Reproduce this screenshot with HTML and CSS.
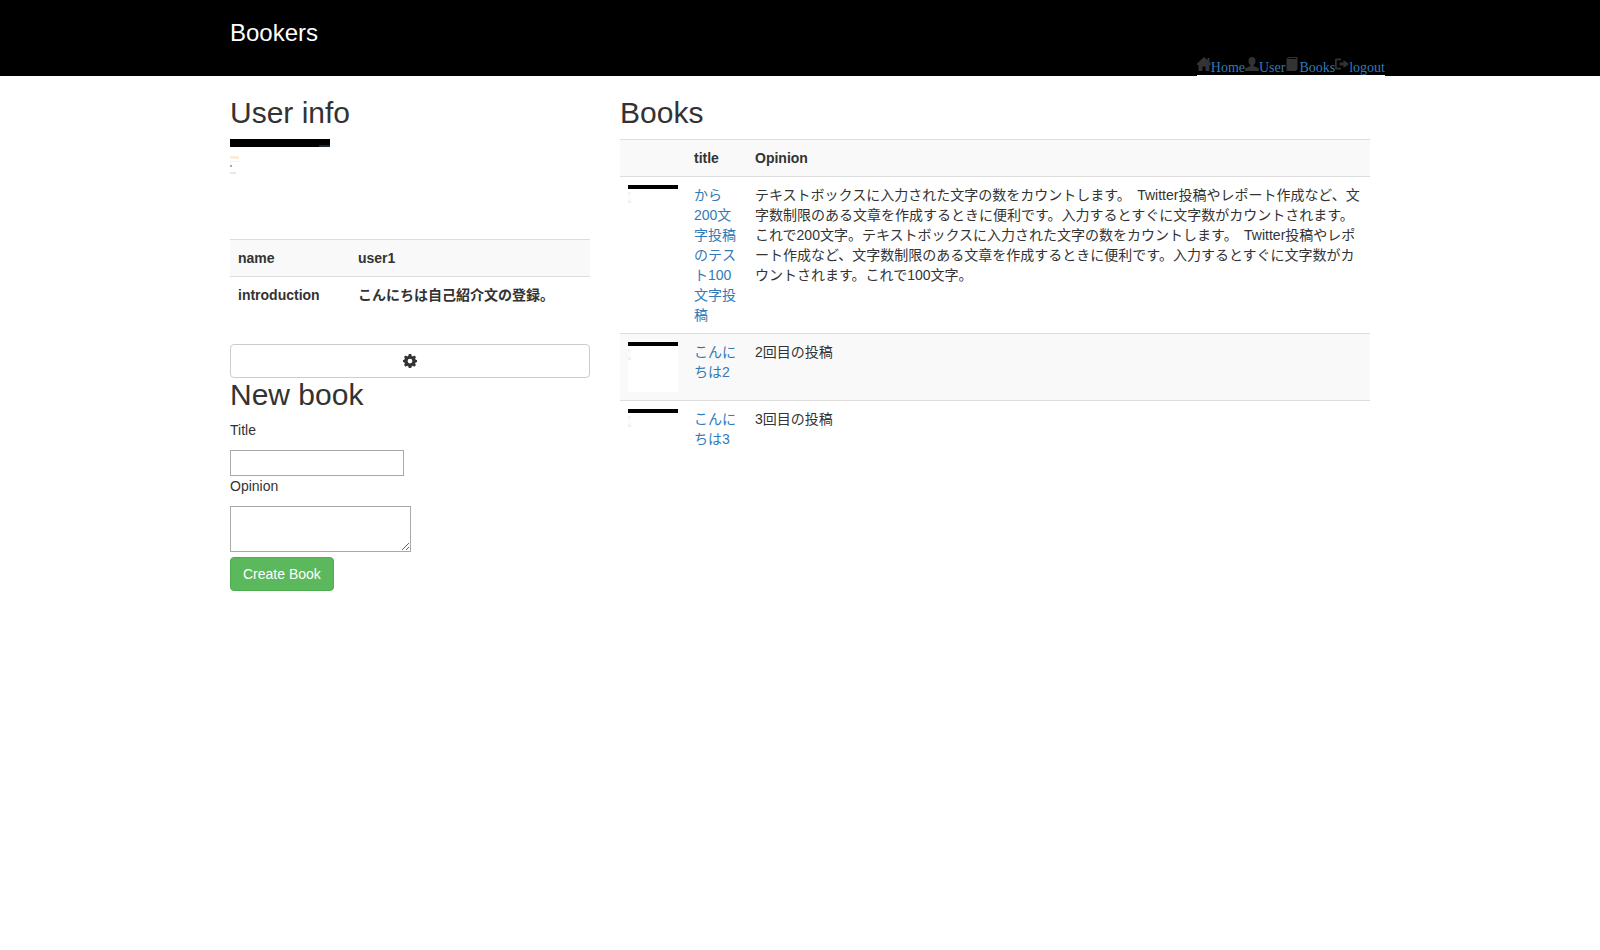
FILE: index.html
```html
<!DOCTYPE html>
<html lang="en">
<head>
  <meta charset="UTF-8" />
  <meta name="viewport" content="width=device-width, initial-scale=1.0"/>
  <title>Bookers</title>
  <link rel="stylesheet" href="styles.css">
</head>
<body>
  <header class="site-header">
    <div class="container header-inner">
      <a class="brand" href="#">Bookers</a>
      <ul class="site-nav">
        <li>
          <svg class="nav-icon" viewBox="0 0 14 14"><path d="M7 0 L10.5 3.2 V1 H12.5 V5 L14 6.4 V8 H12.5 V14 H8.5 V9.5 H5.5 V14 H1.5 V8 H0 V6.4 Z"/></svg><a href="#">Home</a>
        </li>
        <li>
          <svg class="nav-icon" viewBox="0 0 14 14"><path d="M7 0 C9.2 0 10.5 1.6 10.5 4 C10.5 6 9.6 7.4 8.6 8 V9 L13 11 C13.8 11.4 14 12 14 14 H0 C0 12 0.2 11.4 1 11 L5.4 9 V8 C4.4 7.4 3.5 6 3.5 4 C3.5 1.6 4.8 0 7 0 Z"/></svg><a href="#">User</a>
        </li>
        <li>
          <svg class="nav-icon" viewBox="0 0 14 14"><path d="M1.5 2 L3.5 0 H12.5 V12 L11 14 H1.5 Z M3 2 H11 L11.6 1 H4 Z"/></svg><a href="#">Books</a>
        </li>
        <li>
          <svg class="nav-icon" viewBox="0 0 14 14"><path d="M0 3 C0 2 0.8 1.5 1.6 1.5 H6 V3.2 H1.8 V10.8 H6 V12.5 H1.6 C0.8 12.5 0 12 0 11 Z M4.5 5.5 H8.5 V3 L14 7 L8.5 11 V8.5 H4.5 Z"/></svg><a href="#">logout</a>
        </li>
      </ul>
    </div>
  </header>

  <main class="container layout">
    <section class="col-side">
      <h2>User info</h2>
      <div class="profile-image">
        <div class="broken-bar"></div>
        <div class="broken-noise"></div>
      </div>
      <table class="table">
        <tbody>
          <tr class="shaded"><th class="user-label">name</th><th>user1</th></tr>
          <tr><th class="user-label">introduction</th><th>こんにちは自己紹介文の登録。</th></tr>
        </tbody>
      </table>
      <a class="settings-btn" href="#">
        <svg class="gear" viewBox="0 0 14 14"><path fill-rule="evenodd" d="M5.8 0 H8.2 L8.6 1.8 L9.9 2.4 L11.4 1.4 L13 3.1 L12.1 4.5 L12.7 5.8 L14 6.1 V8.1 L12.6 8.5 L12.1 9.7 L13 11.1 L11.3 12.7 L9.9 11.8 L8.6 12.4 L8.2 14 H5.8 L5.4 12.4 L4.1 11.8 L2.7 12.7 L1 11.1 L1.9 9.7 L1.4 8.5 L0 8.1 V6.1 L1.3 5.8 L1.9 4.5 L1 3.1 L2.6 1.4 L4.1 2.4 L5.4 1.8 Z M7 4.7 A2.4 2.4 0 1 0 7 9.5 A2.4 2.4 0 1 0 7 4.7 Z"/></svg>
      </a>
      <h2 class="new-book">New book</h2>
      <form class="book-form">
        <label for="title">Title</label>
        <input id="title" type="text">
        <label for="opinion">Opinion</label>
        <textarea id="opinion"></textarea>
        <button class="btn-create" type="button">Create Book</button>
      </form>
    </section>

    <section class="col-main">
      <h2>Books</h2>
      <table class="table books">
        <thead>
          <tr class="shaded"><th class="thumb-col"></th><th class="title-col">title</th><th>Opinion</th></tr>
        </thead>
        <tbody>
          <tr>
            <td><div class="thumb"><div class="thumb-bar"></div><div class="thumb-noise"></div></div></td>
            <td><a href="#">から200文字投稿のテスト100文字投稿</a></td>
            <td class="opinion">テキストボックスに入力された文字の数をカウントします。 Twitter投稿やレポート作成など、文字数制限のある文章を作成するときに便利です。入力するとすぐに文字数がカウントされます。これで200文字。テキストボックスに入力された文字の数をカウントします。 Twitter投稿やレポート作成など、文字数制限のある文章を作成するときに便利です。入力するとすぐに文字数がカウントされます。これで100文字。</td>
          </tr>
          <tr class="shaded">
            <td><div class="thumb thumb-white"><div class="thumb-bar"></div><div class="thumb-noise"></div></div></td>
            <td><a href="#">こんにちは2</a></td>
            <td>2回目の投稿</td>
          </tr>
          <tr>
            <td><div class="thumb"><div class="thumb-bar"></div><div class="thumb-noise"></div></div></td>
            <td><a href="#">こんにちは3</a></td>
            <td>3回目の投稿</td>
          </tr>
        </tbody>
      </table>
    </section>
  </main>
</body>
</html>
```

FILE: styles.css
```css
/* General */
* {
  box-sizing: border-box;
}

body {
  margin: 0;
  background-color: #fff;
  color: #333;
  font-family: "Liberation Sans", "Noto Sans CJK SC", sans-serif;
  font-size: 14px;
  line-height: 20px;
}

a {
  color: #337ab7;
  text-decoration: none;
}

.container {
  width: 1170px;
  margin: 0 auto;
  padding: 0 15px;
}

/* Header */
.site-header {
  background-color: #000;
  height: 76px;
}

.header-inner {
  position: relative;
  height: 76px;
}

.brand {
  display: block;
  padding-top: 18px;
  color: #fff;
  font-size: 24px;
  line-height: 30px;
}

.site-nav {
  position: absolute;
  right: 0;
  top: 56px;
  display: flex;
  margin: 0;
  padding: 0;
  list-style: none;
  height: 20px;
  border-bottom: 1px solid #fff;
  font-family: "Liberation Serif", serif;
  font-size: 14px;
}

.site-nav li {
  display: flex;
  align-items: flex-start;
}

.site-nav a {
  margin-top: 3px;
  line-height: 18px;
}

.nav-icon {
  width: 14px;
  height: 14px;
  margin-top: 1px;
  fill: #333;
}

/* Columns */
.layout {
  display: grid;
  grid-template-columns: 360px 750px;
  column-gap: 30px;
}

h2 {
  margin: 20px 0 10px;
  font-size: 30px;
  font-weight: 500;
  line-height: 33px;
}

/* Profile */
.profile-image {
  height: 100px;
  width: 100px;
}

.broken-bar {
  position: relative;
  height: 8px;
  background-color: #000;
}

.broken-bar::after {
  content: "";
  position: absolute;
  right: 0;
  bottom: 0;
  width: 11px;
  height: 2px;
  background-color: #1c2836;
}

.broken-noise {
  width: 9px;
  height: 20px;
  margin-top: 9px;
  background:
    linear-gradient(#aaa, #aaa) 0 9px / 2px 2px no-repeat,
    linear-gradient(#dfe8f3, #dfe8f3) 0 16px / 6px 2px no-repeat,
    linear-gradient(#fbeed8, #fbeed8) 0 0 / 9px 3px no-repeat,
    linear-gradient(#f1f1f1, #f1f1f1) 0 5px / 9px 1px no-repeat;
}

/* Tables */
.table {
  width: 100%;
  border-collapse: collapse;
  margin-bottom: 20px;
}

.table th,
.table td {
  padding: 8px;
  border-top: 1px solid #ddd;
  text-align: left;
  vertical-align: top;
}

.shaded {
  background-color: #f9f9f9;
}

.user-label {
  width: 120px;
}

.thumb-col {
  width: 66px;
}

.title-col {
  width: 61px;
}

.opinion {
  word-spacing: 2.5px;
}

.thumb {
  width: 50px;
  height: 50px;
}

.thumb-white {
  background-color: #fff;
}

.thumb-bar {
  height: 4px;
  background-color: #000;
}

.thumb-noise {
  width: 3px;
  height: 11px;
  margin-top: 3px;
  background: linear-gradient(#f4f1ea, #fff 50%, #e8edf5);
}

/* Settings button */
.settings-btn {
  display: flex;
  justify-content: center;
  align-items: center;
  height: 34px;
  margin-top: 31px;
  border: 1px solid #ccc;
  border-radius: 4px;
}

.gear {
  width: 14px;
  height: 14px;
  fill: #333;
}

.new-book {
  margin-top: 0;
  margin-bottom: 9px;
}

/* Form */
.book-form label {
  display: block;
  margin-bottom: 5px;
}

.book-form input,
.book-form textarea {
  display: block;
  border: 1px solid #a9a9a9;
  border-radius: 0;
  padding: 1px 2px;
  margin: 0;
}

.book-form input {
  width: 174px;
  height: 26px;
  margin-top: 10px;
}

.book-form label[for="opinion"] {
  margin-bottom: 10px;
}

.book-form textarea {
  width: 181px;
  height: 46px;
  margin-bottom: 5px;
}

.btn-create {
  display: block;
  height: 34px;
  padding: 6px 12px;
  border: 1px solid #4cae4c;
  border-radius: 4px;
  background-color: #5cb85c;
  color: #fff;
  font-family: inherit;
  font-size: 14px;
  line-height: 20px;
}
```
